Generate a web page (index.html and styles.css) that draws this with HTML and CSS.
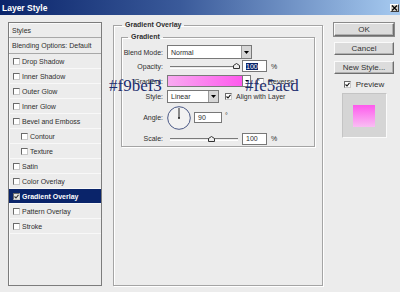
FILE: index.html
```html
<!DOCTYPE html>
<html lang="en">
<head>
    <meta charset="UTF-8">
    <title>Layer Style</title>
    <link rel="stylesheet" href="styles.css">
</head>
<body>
    <div class="window">
        <div class="titlebar">
            <span class="title">Layer Style</span>
            <span class="close">
                <svg width="7" height="6" viewBox="0 0 7 6"><path d="M1 0.5L6 5.5M6 0.5L1 5.5" stroke="#000" stroke-width="1.2"/></svg>
            </span>
        </div>

        <div class="dialog">
            <ul class="styles-list">
                <li class="head">Styles</li>
                <li class="head blend">Blending Options: Default</li>
                <li><span class="check"></span>Drop Shadow</li>
                <li><span class="check"></span>Inner Shadow</li>
                <li><span class="check"></span>Outer Glow</li>
                <li><span class="check"></span>Inner Glow</li>
                <li><span class="check"></span>Bevel and Emboss</li>
                <li class="sub"><span class="check"></span>Contour</li>
                <li class="sub"><span class="check"></span>Texture</li>
                <li><span class="check"></span>Satin</li>
                <li><span class="check"></span>Color Overlay</li>
                <li class="selected">
                    <span class="check on">
                        <svg width="5" height="5" viewBox="0 0 5 5"><path d="M0.5 2.5L2 4L4.5 0.8" fill="none" stroke="#333" stroke-width="1.1"/></svg>
                    </span>Gradient Overlay
                </li>
                <li><span class="check"></span>Pattern Overlay</li>
                <li><span class="check"></span>Stroke</li>
            </ul>

            <fieldset class="group outer">
                <legend>Gradient Overlay</legend>
                <fieldset class="group inner">
                    <legend>Gradient</legend>

                    <div class="row row-blend">
                        <label>Blend Mode:</label>
                        <div class="select wide">
                            <span class="value">Normal</span>
                            <span class="drop"><svg width="5" height="3" viewBox="0 0 5 3"><path d="M0 0H5L2.5 3Z" fill="#000"/></svg></span>
                        </div>
                    </div>

                    <div class="row row-opacity">
                        <label>Opacity:</label>
                        <div class="slider">
                            <div class="track"></div>
                            <svg class="thumb" style="left: 66px" width="7" height="6" viewBox="0 0 7 6"><path d="M0.5 5.5V2.5L3.5 0.5L6.5 2.5V5.5Z" fill="#eee" stroke="#333"/></svg>
                        </div>
                        <div class="num"><span class="picked">100</span></div>
                        <span class="unit">%</span>
                    </div>

                    <div class="row row-gradient">
                        <label>Gradient:</label>
                        <div class="swatch"></div>
                        <span class="swatch-drop"><svg width="4" height="2" viewBox="0 0 4 2"><path d="M0 0H4L2 2Z" fill="#000"/></svg></span>
                        <span class="check reverse"></span>
                        <span class="check-label">Reverse</span>
                    </div>

                    <div class="row row-style">
                        <label>Style:</label>
                        <div class="select narrow">
                            <span class="value">Linear</span>
                            <span class="drop"><svg width="5" height="3" viewBox="0 0 5 3"><path d="M0 0H5L2.5 3Z" fill="#000"/></svg></span>
                        </div>
                        <span class="check align">
                            <svg width="5" height="5" viewBox="0 0 5 5"><path d="M0.5 2.5L2 4L4.5 0.8" fill="none" stroke="#111" stroke-width="1.1"/></svg>
                        </span>
                        <span class="check-label">Align with Layer</span>
                    </div>

                    <div class="row row-angle">
                        <label>Angle:</label>
                        <svg class="dial" width="24" height="24" viewBox="0 0 24 24">
                            <circle cx="12" cy="12" r="11.3" fill="#f2f2f2" stroke="#4b5986" stroke-width="1"/>
                            <line x1="12" y1="12" x2="12" y2="2" stroke="#222" stroke-width="1"/>
                            <circle cx="12" cy="12" r="1" fill="#222"/>
                        </svg>
                        <div class="num angle">90</div>
                        <span class="unit degree">°</span>
                    </div>

                    <div class="row row-scale">
                        <label>Scale:</label>
                        <div class="slider">
                            <div class="track"></div>
                            <svg class="thumb" style="left: 41px" width="7" height="6" viewBox="0 0 7 6"><path d="M0.5 5.5V2.5L3.5 0.5L6.5 2.5V5.5Z" fill="#eee" stroke="#333"/></svg>
                        </div>
                        <div class="num">100</div>
                        <span class="unit">%</span>
                    </div>
                </fieldset>
            </fieldset>

            <div class="side">
                <button class="btn default">OK</button>
                <button class="btn">Cancel</button>
                <button class="btn">New Style...</button>
                <div class="preview-toggle">
                    <span class="check">
                        <svg width="5" height="5" viewBox="0 0 5 5"><path d="M0.5 2.5L2 4L4.5 0.8" fill="none" stroke="#111" stroke-width="1.1"/></svg>
                    </span>
                    <span>Preview</span>
                </div>
                <div class="preview">
                    <div class="preview-square"></div>
                </div>
            </div>
        </div>

        <span class="note note-left">#f9bef3</span>
        <span class="note note-right">#fe5aed</span>
    </div>
</body>
</html>
```

FILE: styles.css
```css
body {
    margin: 0;
    background: #ececec;
    font-family: "Liberation Sans", Arial, sans-serif;
    font-size: 7px;
    color: #2e2e2e;
}
.window {
    position: relative;
    width: 400px;
    height: 292px;
    overflow: hidden;
}
.titlebar {
    height: 15px;
    box-sizing: border-box;
    padding: 0 1px 0 2px;
    display: flex;
    align-items: center;
    justify-content: space-between;
    background: linear-gradient(to right, #0a246a, #3a5a9a 45%, #a6caf0);
}
.title {
    color: #fff;
    font-weight: bold;
    font-size: 8.5px;
}
.close {
    width: 9px;
    height: 8px;
    box-sizing: border-box;
    display: flex;
    align-items: center;
    justify-content: center;
    background: #d4d0c8;
    border: 1px solid;
    border-color: #fff #404040 #404040 #fff;
}
.dialog {
    display: flex;
    height: 277px;
    box-sizing: border-box;
    padding: 6px 6px 6px 8px;
}

/* left list */
.styles-list {
    width: 94px;
    margin: 1px 0 0;
    padding: 0;
    list-style: none;
    box-sizing: border-box;
    border: 1px solid #7c7c7c;
    box-shadow: inset 1px 1px 0 #fafafa;
}
.styles-list li {
    height: 15px;
    box-sizing: border-box;
    display: flex;
    align-items: center;
    gap: 2px;
    padding-left: 4px;
    border-bottom: 1px solid #f8f8f8;
    white-space: nowrap;
}
.styles-list li.head {
    padding-left: 3px;
    border-bottom-color: #a8a8a8;
}
.styles-list li.blend {
    height: 16px;
}
.styles-list li.sub {
    padding-left: 12px;
}
.styles-list li.selected {
    background: #0a246a;
    color: #fff;
    font-weight: bold;
}
.check {
    width: 7px;
    height: 7px;
    box-sizing: border-box;
    flex: none;
    display: inline-flex;
    align-items: center;
    justify-content: center;
    background: #fff;
    border: 1px solid;
    border-color: #6a6a6a #c8c8c8 #c8c8c8 #6a6a6a;
}
.check.on {
    background: #e4e4e4;
}

/* group boxes */
.group {
    margin: 0;
    border: 1px solid #a4a4a4;
    box-shadow: 1px 1px 0 #fff, inset 1px 1px 0 #fff;
}
.group legend {
    font-weight: bold;
    line-height: 8px;
    padding: 0 3px;
}
.outer {
    width: 210px;
    box-sizing: border-box;
    margin-left: 11px;
    padding: 0 7px;
}
.outer > legend {
    margin-left: 1px;
}
.inner {
    margin-top: 4px;
    padding: 0 0 1px;
}
.inner > legend {
    margin-left: 6px;
}
.row {
    display: flex;
    align-items: center;
    white-space: nowrap;
}
.row label {
    width: 41px;
    margin-right: 4px;
    text-align: right;
    flex: none;
}
.row-blend { margin-top: 4px; height: 14px; }
.row-opacity { margin-top: 1px; height: 12px; }
.row-gradient { margin-top: 3px; height: 12px; }
.row-style { margin-top: 3px; height: 13px; }
.row-angle { margin-top: 2px; height: 25px; }
.row-scale { margin-top: 2px; height: 13px; }

.select {
    height: 14px;
    box-sizing: border-box;
    display: flex;
    align-items: stretch;
    background: #fff;
    border: 1px solid #787878;
}
.select .value {
    padding-left: 3px;
    display: flex;
    align-items: center;
}
.select .drop {
    margin-left: auto;
    width: 9px;
    display: flex;
    align-items: center;
    justify-content: center;
    background: #d6d6d6;
    border-left: 1px solid #9a9a9a;
}
.select.wide {
    width: 85px;
}
.select.narrow {
    width: 52px;
    height: 13px;
}
.slider {
    position: relative;
    width: 73px;
    height: 12px;
    display: flex;
    align-items: center;
}
.track {
    flex: 1;
    margin: 2px 2px 0 3px;
    height: 1px;
    border-top: 1px solid #7a7a7a;
    border-bottom: 1px solid #fff;
}
.thumb {
    position: absolute;
    top: 3px;
}
.num {
    width: 25px;
    height: 12px;
    box-sizing: border-box;
    margin-left: 2px;
    padding-left: 3px;
    display: flex;
    align-items: center;
    background: #fff;
    border: 1px solid #787878;
}
.num.angle {
    width: 28px;
    height: 11px;
    margin-left: 3px;
}
.picked {
    background: #0a246a;
    color: #fff;
}
.unit {
    margin-left: 4px;
}
.degree {
    margin-left: 3px;
    align-self: flex-start;
    margin-top: 7px;
}
.swatch {
    width: 76px;
    height: 12px;
    box-sizing: border-box;
    border: 1px solid #7a7a7a;
    background: linear-gradient(to right, #f8aaf0, #fe5aed);
}
.swatch-drop {
    width: 8px;
    height: 12px;
    box-sizing: border-box;
    display: flex;
    align-items: center;
    justify-content: center;
    background: #fff;
    border: 1px solid #7a7a7a;
    border-left: none;
}
.reverse {
    margin-left: 6px;
}
.align {
    margin-left: 6px;
}
.check-label {
    margin-left: 4px;
}

/* right column */
.side {
    width: 60px;
    margin: 2px 0 0 11px;
    display: flex;
    flex-direction: column;
    align-items: center;
}
.btn {
    width: 60px;
    height: 13px;
    margin: 0 0 6px;
    padding: 0;
    font-family: "Liberation Sans", Arial, sans-serif;
    font-size: 8px;
    color: #333;
    background: #dcdcdc;
    border: 1px solid;
    border-color: #fafafa #6e6e6e #6e6e6e #fafafa;
    box-shadow: inset -1px -1px 0 #b0b0b0;
}
.btn.default {
    outline: 1px solid #8a8a8a;
    outline-offset: 0;
}
.preview-toggle {
    display: flex;
    align-items: center;
    gap: 5px;
    height: 9px;
    font-size: 8px;
}
.preview {
    width: 45px;
    height: 45px;
    box-sizing: border-box;
    margin-top: 4px;
    display: flex;
    align-items: center;
    justify-content: center;
    background: #d5d5d5;
    border: 1px solid;
    border-color: #c4c4c4 #fafafa #fafafa #c4c4c4;
}
.preview-square {
    width: 22px;
    height: 22px;
    background: linear-gradient(to bottom, #fe5aed, #f9bef3);
}

/* colour notes written over the dialog */
.note {
    position: absolute;
    top: 77px;
    font-family: "Liberation Serif", "Times New Roman", serif;
    font-size: 17px;
    line-height: 17px;
    color: #1d2e6e;
}
.note-left {
    left: 109px;
}
.note-right {
    left: 245px;
}
```
